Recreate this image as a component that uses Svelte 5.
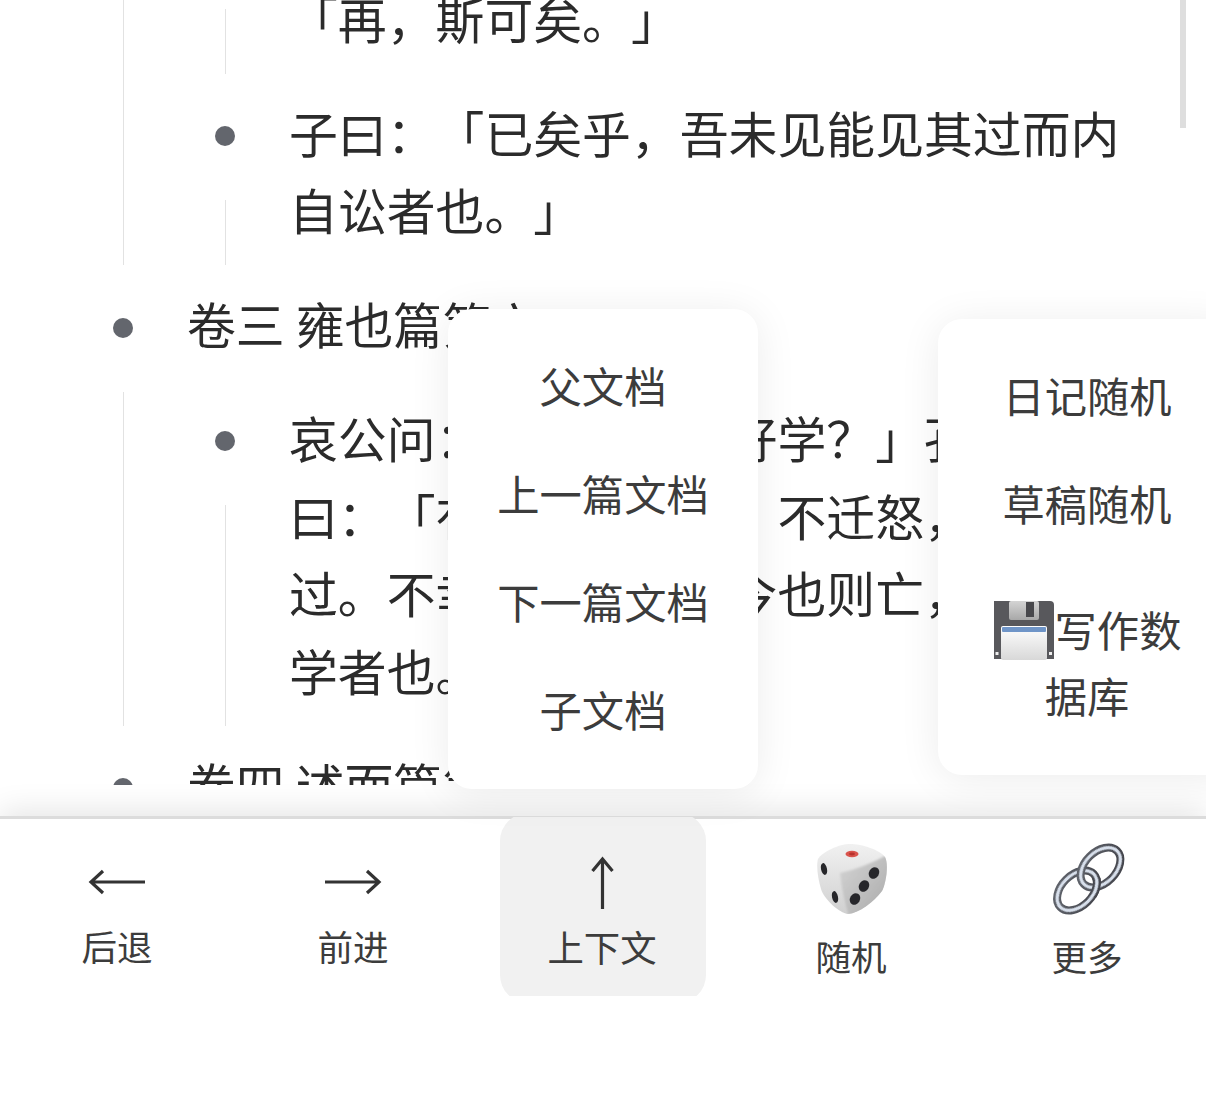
<script>
  const contextItems = ['父文档', '上一篇文档', '下一篇文档', '子文档'];
</script>

<div class="page">
  <div class="doc">
    <ul class="root">
      <li>
        <p>卷二 公冶长篇第五</p>
        <ul>
          <li><p>季文子三思而后行。子闻之，曰：「再，斯可矣。」</p></li>
          <li><p>子曰：「已矣乎，吾未见能见其过而内自讼者也。」</p></li>
        </ul>
      </li>
      <li>
        <p>卷三 雍也篇第六</p>
        <ul>
          <li><p>哀公问：「弟子孰为好学？」孔子对曰：「有颜回者好学，不迁怒，不贰过。不幸短命死矣！今也则亡，未闻好学者也。」</p></li>
        </ul>
      </li>
      <li><p>卷四 述而篇第七</p></li>
    </ul>
  </div>
  <div class="scrollbar"></div>

  <div class="menu context-menu">
    {#each contextItems as item}
      <div class="menu-item">{item}</div>
    {/each}
  </div>

  <div class="menu more-menu">
    <div class="menu-item">日记随机</div>
    <div class="menu-item">草稿随机</div>
    <div class="menu-item db">
      <svg class="floppy" viewBox="0 0 62 60" width="62" height="60">
        <defs>
          <linearGradient id="labelFill" x1="0" y1="0" x2="0" y2="1">
            <stop offset="0" stop-color="#ffffff" />
            <stop offset="1" stop-color="#d8d8d8" />
          </linearGradient>
          <linearGradient id="shutterFill" x1="0" y1="0" x2="0" y2="1">
            <stop offset="0" stop-color="#d4d4d4" />
            <stop offset="1" stop-color="#a8a8a8" />
          </linearGradient>
        </defs>
        <path d="M1 1H57Q61 1 61 5V59H1Z" fill="#58585c" />
        <rect x="16" y="1" width="30" height="19" rx="2" fill="url(#shutterFill)" />
        <rect x="33" y="2" width="8" height="15" fill="#48484c" />
        <rect x="8" y="26" width="46" height="34" rx="2" fill="url(#labelFill)" />
        <rect x="9" y="27" width="44" height="5" rx="1" fill="#6f95c8" />
        <rect x="2.5" y="52" width="3" height="3" fill="#eee" />
        <rect x="56" y="52" width="3" height="3" fill="#eee" />
      </svg>写作数据库
    </div>
  </div>

  <nav class="toolbar">
    <button class="tool">
      <svg class="arrow" viewBox="0 0 60 60" width="60" height="60">
        <path d="M3 30H57M15 19L3 30L15 41" />
      </svg>
      <span>后退</span>
    </button>
    <button class="tool">
      <svg class="arrow" viewBox="0 0 60 60" width="60" height="60">
        <path d="M1 30H55M43 19L55 30L43 41" />
      </svg>
      <span>前进</span>
    </button>
    <button class="tool active">
      <svg class="arrow" viewBox="0 0 60 60" width="60" height="60">
        <path d="M29.5 58V8M19.5 20L29.5 8L39.5 20" />
      </svg>
      <span>上下文</span>
    </button>
    <button class="tool emoji">
      <svg viewBox="0 0 71 70" width="71" height="70">
        <defs>
          <linearGradient id="diceRight" x1="0" y1="0" x2="1" y2="1">
            <stop offset="0" stop-color="#d6d6d6" />
            <stop offset="1" stop-color="#a8a8a8" />
          </linearGradient>
          <linearGradient id="diceBody" x1="0" y1="0" x2="0" y2="1">
            <stop offset="0" stop-color="#f1f1f1" />
            <stop offset="1" stop-color="#d0d0d0" />
          </linearGradient>
          <clipPath id="diceShape">
            <path d="M33 0C45 0 63 6 68 13C72 20 69 40 65 47C57 58 42 69 31 70C22 69 7 55 4 45C1 35 -1 22 1 15C5 8 22 0 33 0Z" />
          </clipPath>
          <filter id="soft" x="-10%" y="-10%" width="120%" height="120%">
            <feGaussianBlur stdDeviation="1" />
          </filter>
        </defs>
        <g clip-path="url(#diceShape)">
          <rect width="71" height="70" fill="url(#diceBody)" />
          <path d="M23 29Q44 25 72 10V72H32Q25 50 23 29Z" fill="url(#diceRight)" filter="url(#soft)" />
        </g>
        <ellipse cx="35" cy="10" rx="6.5" ry="3.2" fill="#d9534c" />
        <ellipse cx="35" cy="10" rx="3" ry="1.4" fill="#b8322c" />
        <ellipse cx="7" cy="25" rx="3" ry="6" transform="rotate(-12 7 25)" fill="#26262a" />
        <ellipse cx="18" cy="53" rx="3" ry="6" transform="rotate(-12 18 53)" fill="#26262a" />
        <ellipse cx="57" cy="29" rx="5" ry="6" transform="rotate(30 57 29)" fill="#26262a" />
        <ellipse cx="47" cy="42" rx="5" ry="6" transform="rotate(30 47 42)" fill="#26262a" />
        <ellipse cx="38" cy="55" rx="5" ry="6" transform="rotate(30 38 55)" fill="#26262a" />
      </svg>
      <span>随机</span>
    </button>
    <button class="tool emoji">
      <svg class="chain" viewBox="0 0 71 70" width="71" height="70">
        <defs>
          <linearGradient id="ringEdge" x1="0" y1="0" x2="1" y2="1">
            <stop offset="0" stop-color="#62666e" />
            <stop offset="1" stop-color="#404148" />
          </linearGradient>
          <clipPath id="overlap"><rect x="38" y="34" width="16" height="20" /></clipPath>
          <filter id="ringSoft" x="-10%" y="-10%" width="120%" height="120%">
            <feGaussianBlur stdDeviation="0.6" />
          </filter>
          <g id="ring" fill="none">
            <ellipse rx="23.5" ry="15.5" stroke="url(#ringEdge)" stroke-width="8" />
            <ellipse rx="23.5" ry="15.5" stroke="#d8e0ec" stroke-width="3.2" filter="url(#ringSoft)" />
          </g>
        </defs>
        <use href="#ring" transform="translate(24 46.5) rotate(-45)" />
        <use href="#ring" transform="translate(47.5 23.5) rotate(-45)" />
        <g clip-path="url(#overlap)">
          <use href="#ring" transform="translate(24 46.5) rotate(-45)" />
        </g>
      </svg>
      <span>更多</span>
    </button>
  </nav>
</div>

<style>
  :global(body) {
    background: #fff;
  }

  .page {
    position: relative;
    height: 1098px;
    overflow: hidden;
    font-family: "Noto Sans CJK SC", "Noto Sans", sans-serif;
    text-spacing-trim: space-all;
  }

  .doc {
    height: 785px;
    margin-bottom: 31px;
    overflow: hidden;
    padding-right: 70px;
    color: #2b2b2b;
    font-size: 48.85px;
    line-height: 77.7px;
  }

  ul {
    list-style: none;
    margin: 0;
    padding: 0 0 0 102px;
  }

  ul.root {
    margin-top: -231.8px;
    padding-left: 187px;
  }

  li {
    position: relative;
    margin-top: 12.5px;
  }

  li::before {
    content: "";
    position: absolute;
    left: -64px;
    top: 114px;
    bottom: 0;
    width: 1px;
    background: #e2e2e2;
  }

  li::after {
    content: "";
    position: absolute;
    left: -74px;
    top: 40px;
    width: 20px;
    height: 20px;
    border-radius: 50%;
    background: #63666d;
  }

  p {
    margin: 0;
    padding: 6.6px 0 17px;
  }

  .scrollbar {
    position: absolute;
    top: 0;
    right: 20px;
    width: 6px;
    height: 128px;
    background: #dedede;
  }

  .menu {
    position: absolute;
    z-index: 2;
    padding: 24px 0;
    background: #fff;
    border-radius: 24px;
    box-shadow: 0 4px 40px rgba(0, 0, 0, 0.08);
    color: #3c3c3c;
    font-size: 42.3px;
    line-height: 66px;
    text-align: center;
  }

  .menu-item {
    padding: 19px 0 23px;
  }

  .context-menu {
    left: 448px;
    top: 309px;
    width: 310px;
  }

  .more-menu {
    left: 938px;
    top: 319px;
    width: 298px;
  }

  .more-menu .menu-item {
    padding-left: 40px;
    padding-right: 40px;
  }

  .more-menu .db {
    padding-top: 37px;
  }

  .floppy {
    vertical-align: -13px;
  }

  .toolbar {
    position: relative;
    z-index: 1;
    display: flex;
    border-top: 3px solid #dcdcdc;
    box-shadow: 0 -6px 28px rgba(0, 0, 0, 0.1);
    background: #fff;
    height: 320px;
    box-sizing: border-box;
  }

  .tool {
    display: flex;
    flex-direction: column;
    align-items: center;
    width: 236px;
    height: 178px;
    padding: 33px 0 0;
    border: 0;
    background: none;
    color: #3c3c3c;
    font-family: inherit;
    font-size: 35.6px;
    line-height: 42px;
  }

  .tool span {
    margin-left: -2px;
  }

  .tool svg {
    display: block;
    margin-bottom: 13px;
  }

  .chain {
    overflow: visible;
  }

  .arrow path {
    fill: none;
    stroke: #333;
    stroke-width: 3.2;
  }

  .tool.active {
    width: 206px;
    height: 190px;
    margin: -6px 28px 0;
    padding-top: 38px;
    background: #f1f1f1;
    border-radius: 28px;
    clip-path: inset(4px 0 7px 0);
    font-size: 36.4px;
  }

  .tool.active svg {
    margin-bottom: 14px;
  }

  .tool.emoji {
    padding-top: 25px;
  }

  .tool.emoji svg {
    margin-bottom: 21px;
  }
</style>
